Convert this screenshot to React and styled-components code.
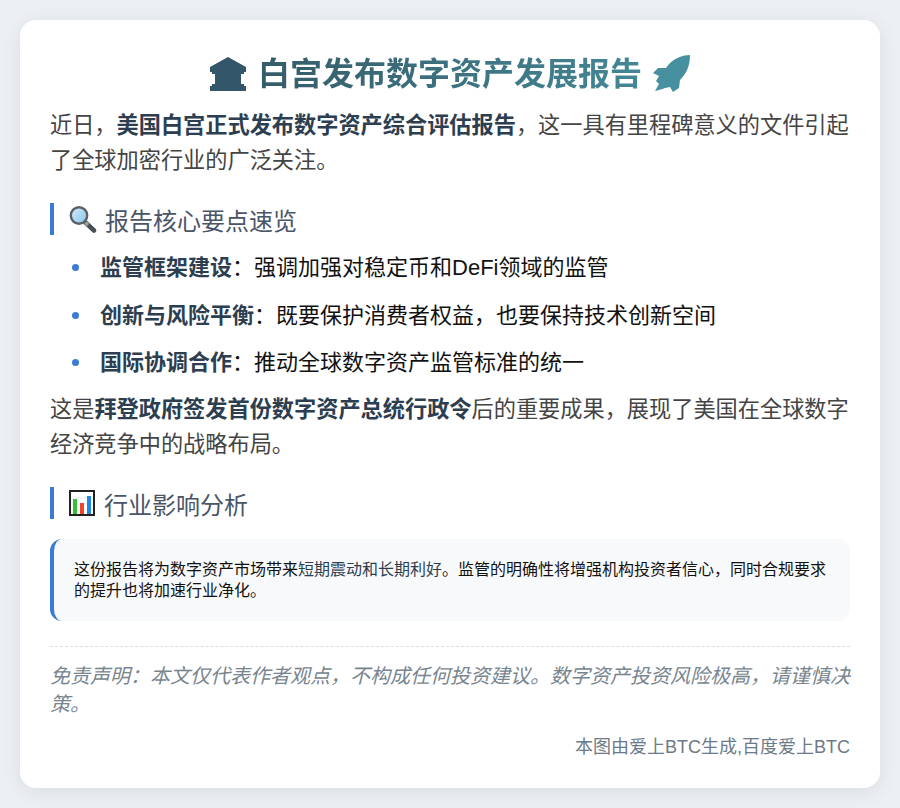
import React from "react";
import styled, { createGlobalStyle } from "styled-components";

const GlobalStyle = createGlobalStyle`
  html, body {
    margin: 0;
    padding: 0;
    background: #eceff3;
  }
  * {
    box-sizing: border-box;
  }
`;

function BankIcon() {
  return (
    <svg width="38" height="34" viewBox="0 0 38 34">
      <path
        fill="#34566b"
        d="M19 0 L37 10 V15 H35 V17 H32 V27 H35 V29 H37 V34 H1 V29 H3 V27 H6 V17 H3 V15 H1 V10 Z"
      />
    </svg>
  );
}

function RocketIcon() {
  return (
    <svg width="38" height="38" viewBox="0 0 38 38">
      <path
        fill="#4690a0"
        d="M37 0 C30 0 22 3 16 9 L13 13 L5 13 L0 18 L6 21 L3 26 L6 29 L2 36 C6 35 10 34 12 33 L17 32 L20 37 L26 33 L27 25 C34 18 37 10 37 0 Z"
      />
    </svg>
  );
}

function SearchIcon() {
  return (
    <svg width="28" height="28" viewBox="0 0 28 28">
      <defs>
        <linearGradient id="lens" x1="0" y1="0" x2="1" y2="1">
          <stop offset="0" stopColor="#d4ecfb" />
          <stop offset="1" stopColor="#8ac4ec" />
        </linearGradient>
      </defs>
      <path d="M16 17 L25 25.5" stroke="#4a4f55" strokeWidth="4.5" strokeLinecap="round" />
      <path d="M16.5 17.5 L19 20" stroke="#9aa0a6" strokeWidth="3.5" />
      <circle cx="10" cy="10.5" r="8.2" fill="url(#lens)" stroke="#5d6166" strokeWidth="2.4" />
    </svg>
  );
}

function ChartIcon() {
  return (
    <svg width="27" height="28" viewBox="0 0 27 28">
      <rect x="1" y="2" width="24" height="24" fill="#ffffff" stroke="#222222" strokeWidth="2" />
      <path d="M2 9 H24 M2 15 H24 M2 21 H24" stroke="#eeeeee" strokeWidth="1" />
      <rect x="4" y="10" width="4" height="15" fill="#35c03c" />
      <rect x="11" y="14" width="4" height="11" fill="#f0442c" />
      <rect x="18" y="7" width="4" height="18" fill="#1e88e5" />
    </svg>
  );
}

export default function App() {
  return (
    <>
      <GlobalStyle />
      <Page>
        <Card>
          <Title>
            <BankIcon />
            <TitleText>白宫发布数字资产发展报告</TitleText>
            <RocketIcon />
          </Title>
          <Paragraph>
            近日，<strong>美国白宫正式发布数字资产综合评估报告</strong>，这一具有里程碑意义的文件引起了全球加密行业的广泛关注。
          </Paragraph>
          <SectionHeading>
            <SearchIcon />
            报告核心要点速览
          </SectionHeading>
          <List>
            <Item>
              <strong>监管框架建设</strong>：强调加强对稳定币和DeFi领域的监管
            </Item>
            <Item>
              <strong>创新与风险平衡</strong>：既要保护消费者权益，也要保持技术创新空间
            </Item>
            <Item>
              <strong>国际协调合作</strong>：推动全球数字资产监管标准的统一
            </Item>
          </List>
          <Paragraph>
            这是<strong>拜登政府签发首份数字资产总统行政令</strong>后的重要成果，展现了美国在全球数字经济竞争中的战略布局。
          </Paragraph>
          <SectionHeading>
            <ChartIcon />
            行业影响分析
          </SectionHeading>
          <Quote>
            这份报告将为数字资产市场带来<Highlight>短期震动和长期利好</Highlight>。监管的明确性将增强机构投资者信心，同时合规要求的提升也将加速行业净化。
          </Quote>
          <Disclaimer>
            免责声明：本文仅代表作者观点，不构成任何投资建议。数字资产投资风险极高，请谨慎决策。
          </Disclaimer>
          <Credit>本图由爱上BTC生成,百度爱上BTC</Credit>
        </Card>
      </Page>
    </>
  );
}

const Page = styled.div`
  padding: 20px;
  font-family: "Liberation Sans", "Noto Sans CJK SC", sans-serif;
`;

const Card = styled.div`
  background: #ffffff;
  border-radius: 16px;
  padding: 30px;
  box-shadow: 0 4px 20px rgba(0, 0, 0, 0.08);
`;

const Title = styled.h1`
  display: flex;
  justify-content: center;
  align-items: center;
  gap: 11px;
  margin: 0 0 10px;
  font-size: 32px;
  line-height: 48px;
  font-weight: 700;
`;

const TitleText = styled.span`
  background: linear-gradient(90deg, #355b69, #448796);
  -webkit-background-clip: text;
  background-clip: text;
  -webkit-text-fill-color: transparent;
`;

const Paragraph = styled.p`
  margin: 0;
  font-size: 22.2px;
  line-height: 35.2px;
  color: #444444;

  strong {
    color: #2c3e50;
  }
`;

const SectionHeading = styled.h2`
  display: flex;
  align-items: center;
  gap: 8px;
  height: 32px;
  margin: 25px 0 15px;
  padding-left: 15px;
  border-left: 4px solid #3a7bd5;
  font-size: 24px;
  font-weight: 400;
  color: #4a5568;
`;

const List = styled.ul`
  margin: 0;
  padding: 0 0 0 50px;
  list-style: none;
`;

const Item = styled.li`
  position: relative;
  font-size: 22px;
  line-height: 35.2px;
  margin-bottom: 12px;
  color: #111111;

  &::before {
    content: "";
    position: absolute;
    left: -28px;
    top: 14px;
    width: 7px;
    height: 7px;
    border-radius: 50%;
    background: #3a7bd5;
  }

  strong {
    color: #2c3e50;
  }
`;

const Quote = styled.div`
  margin-top: 20px;
  padding: 20px;
  background: #f8f9fb;
  border-left: 4px solid #3a7bd5;
  border-radius: 12px;
  font-size: 16px;
  line-height: 21px;
  color: #111111;
`;

const Highlight = styled.span`
  color: #2c3e50;
`;

const Disclaimer = styled.p`
  margin: 25px 0 0;
  padding-top: 15px;
  border-top: 1px dashed #dddddd;
  font-size: 20px;
  line-height: 28px;
  font-style: italic;
  color: #78858f;
`;

const Credit = styled.div`
  margin-top: 18px;
  text-align: right;
  font-size: 18px;
  line-height: 22px;
  color: #6c7a89;
`;
